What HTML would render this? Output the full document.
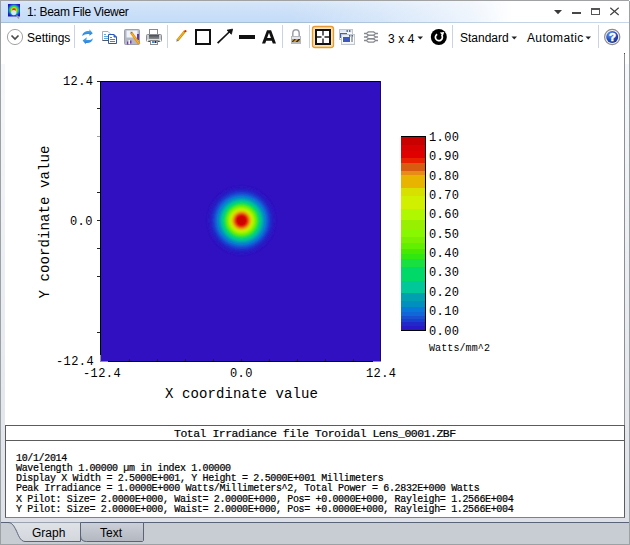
<!DOCTYPE html>
<html><head><meta charset="utf-8">
<style>
*{box-sizing:border-box}
html,body{margin:0;padding:0;width:630px;height:545px;overflow:hidden;background:#fff;position:relative}
body{font-family:"Liberation Sans",sans-serif;color:#000}
.a{position:absolute}
.mono{font-family:"Liberation Mono",monospace}
.sep{position:absolute;width:1px;background:#c5d2e0}
.ui{font-size:12px;line-height:14px;color:#1e1e1e;white-space:nowrap}
.dd{position:absolute;width:0;height:0;border-left:2.5px solid transparent;border-right:2.5px solid transparent;border-top:3px solid #222}
.tk{position:absolute;background:#222}
.lbl{position:absolute;font-family:"Liberation Mono",monospace;color:#000;white-space:nowrap}
.bold{-webkit-text-stroke:0.2px #000}
</style></head><body>

<!-- window frame -->
<div class="a" style="left:0;top:0;width:629px;height:1px;background:#9ba1a5"></div>
<div class="a" style="left:0;top:0;width:1px;height:545px;background:#9ba1a5"></div>
<div class="a" style="left:629px;top:1px;width:1px;height:544px;background:#9ba1a5"></div>

<!-- title bar -->
<div class="a" style="left:1px;top:1px;width:628px;height:21px;background:linear-gradient(90deg,rgba(255,255,255,0) 0px,rgba(255,255,255,0) 290px,rgba(255,255,255,.3) 380px,rgba(255,255,255,.7) 470px,#fff 512px,#fff 630px),linear-gradient(180deg,#dae8fa 0px,#d2e3f8 4px,#cce0f8 10px,#c4dcf8 21px)"></div>
<div class="a" style="left:1px;top:22px;width:628px;height:1px;background:linear-gradient(90deg,#a6bed6 0px,#a6bed6 300px,#c0d2e4 480px,#c8d8ea 630px)"></div>
<div class="a" style="left:0;top:0;width:629px;height:1px;background:#a0a2a4"></div>
<svg class="a" style="left:8px;top:4px" width="14" height="16" viewBox="0 0 14 16">
  <defs><radialGradient id="ig" gradientUnits="userSpaceOnUse" cx="6" cy="6" r="7">
    <stop offset="0" stop-color="#d02000"/><stop offset="0.2" stop-color="#e05000"/><stop offset="0.35" stop-color="#e8d000"/><stop offset="0.5" stop-color="#40e020"/><stop offset="0.65" stop-color="#10b0c0"/><stop offset="0.8" stop-color="#2050d0"/><stop offset="1" stop-color="#2010c8"/></radialGradient></defs>
  <rect x="0" y="0" width="12" height="12.5" fill="url(#ig)"/>
  <circle cx="5.8" cy="8.6" r="2.6" fill="#d8ecf8" opacity="0.95"/>
  <path d="M8.5 11.5L11 14.5" stroke="#a0a0a0" stroke-width="1.6"/>
</svg>
<div class="a ui" style="left:27px;top:5px;letter-spacing:-0.3px;color:#000">1: Beam File Viewer</div>
<!-- window buttons -->
<svg class="a" style="left:550px;top:4px" width="75" height="14" viewBox="550 4 75 14">
  <path d="M554 10H562L558 14.2Z" fill="#3a3a3a"/>
  <rect x="572" y="12" width="9" height="2" fill="#474747"/>
  <rect x="591.5" y="8.5" width="8" height="6" fill="none" stroke="#555" stroke-width="1"/>
  <rect x="591" y="8" width="9" height="2" fill="#555"/>
  <path d="M610.3 7.8L618.7 15M618.7 7.8L610.3 15" stroke="#404040" stroke-width="1.15"/>
</svg>
<!-- toolbar -->
<svg class="a" style="left:0;top:0" width="630" height="53" viewBox="0 0 630 53">
  <defs>
    <linearGradient id="rf" x1="0" y1="0" x2="0" y2="1"><stop offset="0" stop-color="#58b0f0"/><stop offset="1" stop-color="#1c78d8"/></linearGradient>
    <radialGradient id="hg" cx="0.35" cy="0.3" r="0.8"><stop offset="0" stop-color="#6a9cf0"/><stop offset="0.55" stop-color="#2550c0"/><stop offset="1" stop-color="#142c90"/></radialGradient>
    <linearGradient id="pb" x1="0" y1="0" x2="0" y2="1"><stop offset="0" stop-color="#4a4e52"/><stop offset="1" stop-color="#8a8e90"/></linearGradient>
  </defs>
  <!-- settings chevron -->
  <circle cx="15" cy="37" r="7.6" fill="#fff" stroke="#a4a4a4" stroke-width="1"/>
  <path d="M11.5 35.5l3.5 3.5l3.5-3.5" fill="none" stroke="#4a4a4a" stroke-width="1.7"/>
  <!-- separators -->
  <g fill="#c8d4e2"><rect x="74" y="25" width="1" height="23"/><rect x="167" y="25" width="1" height="23"/><rect x="282" y="25" width="1" height="23"/><rect x="309" y="25" width="1" height="23"/><rect x="452" y="25" width="1" height="23"/><rect x="598" y="25" width="1" height="23"/></g>
  <!-- refresh -->
  <g fill="url(#rf)">
    <path d="M82.2 36C82.8 32 85.8 30.6 89.4 31L89.4 29.3L92.8 33.3L89.4 35.8L89.4 34C86.5 33.6 84 34.2 82.2 36Z"/>
    <path d="M93 38.2C92.4 42 89.4 43.4 85.8 43L85.8 44.2L82.6 40.5L86.8 37.2L86.4 39.9C89 40.3 91.2 39.8 93 38.2Z"/>
  </g>
  <!-- copy -->
  <path d="M102.5 31.5H108L110 33.5V40.5H102.5Z" fill="#fff" stroke="#9fb0c8" stroke-width="1"/>
  <path d="M102.5 40.5H110" stroke="#505868" stroke-width="1"/>
  <path d="M104 34.5h2M104 36.5h4M104 38.5h4" stroke="#5aaae8" stroke-width="1"/>
  <path d="M108.5 34.5H114L116.5 37V43.5H108.5Z" fill="#fff" stroke="#2a58b8" stroke-width="1"/>
  <path d="M114 34.5V37H116.5" fill="#3a70d0" stroke="#2a58b8" stroke-width="1"/>
  <path d="M110 37.5h2M110 39.5h5M110 41.5h5" stroke="#3a88d8" stroke-width="1"/>
  <!-- save/edit floppy -->
  <rect x="124.5" y="29.5" width="15" height="15" rx="1" fill="#b4b8c4" stroke="#9ca0ac" stroke-width="1"/>
  <rect x="126.5" y="30.5" width="11" height="7" fill="#eef2fb"/>
  <rect x="137" y="34" width="2" height="6" fill="#6a3aa0"/>
  <rect x="127" y="41.5" width="1.5" height="3" fill="#7040a8"/>
  <rect x="130" y="40.5" width="1.5" height="3" fill="#7040a8"/>
  <rect x="128.5" y="40" width="1.5" height="4" fill="#f4f4f8"/>
  <path d="M131 32.3L139.3 44" stroke="#e89010" stroke-width="2.6"/>
  <path d="M131.3 32.8L139 43.5" stroke="#f8c020" stroke-width="0.9"/>
  <path d="M130.5 31.5L132.2 32.2L131.2 33.4Z" fill="#707070"/>
  <!-- printer -->
  <rect x="149.5" y="29.5" width="8" height="5" fill="#fff" stroke="#8a8a8a" stroke-width="1"/>
  <rect x="146.5" y="34.5" width="15" height="7" rx="1" fill="#c8ccd4" stroke="#8a8e92" stroke-width="1"/>
  <rect x="149" y="35" width="10" height="4" fill="url(#pb)"/>
  <rect x="147" y="39" width="14" height="1" fill="#dde0e4"/>
  <rect x="147" y="40" width="14" height="1.5" fill="#fff"/>
  <rect x="150.5" y="40.5" width="7" height="4" fill="#fff" stroke="#8a8a8a" stroke-width="1"/>
  <rect x="152" y="41" width="2" height="2" fill="#3a90e0"/>
  <rect x="154.5" y="41" width="2" height="2" fill="#1a2a50"/>
  <rect x="148.5" y="40.5" width="1.2" height="1.5" fill="#101030"/>
  <rect x="158.3" y="40.5" width="1.2" height="1.5" fill="#101030"/>
  <!-- pencil -->
  <path d="M177.3 40.5L185.3 30.7" stroke="#d8900f" stroke-width="2.6"/>
  <path d="M177.6 40L185 31" stroke="#f4c020" stroke-width="1"/>
  <path d="M184.6 31.8L185.6 30.4L186.4 31.2Z" fill="#d82020" stroke="#d82020" stroke-width="1"/>
  <path d="M176.3 41.8L176.9 39.4L178.6 40.8Z" fill="#707478"/>
  <!-- rectangle -->
  <rect x="196" y="30" width="14" height="14" fill="none" stroke="#111" stroke-width="2"/>
  <!-- arrow -->
  <path d="M217.6 43.2L229.2 32" stroke="#111" stroke-width="1.7"/>
  <path d="M227 30.2L232.6 29.1L231.4 34.2Z" fill="#111" stroke="#111" stroke-width="0.8" stroke-linejoin="round"/>
  <!-- line -->
  <rect x="239" y="35" width="16" height="4" fill="#111"/>
  <!-- A -->
  <path d="M262 43.6L267 30.2H271.1L276 43.6H272.8L271.8 40.7H266.2L265.2 43.6ZM267.1 38H270.9L269 32.8Z" fill="#111" fill-rule="evenodd"/>
  <!-- lock -->
  <path d="M292.8 36.5V33.2C292.8 30.7 294.2 29.7 296 29.7S299.2 30.7 299.2 33.2V36.5" fill="none" stroke="#9ca0a6" stroke-width="1.5"/>
  <rect x="291.5" y="36.5" width="9" height="7" fill="#e4e6ea" stroke="#b4b8bc" stroke-width="1"/>
  <rect x="292" y="39" width="8" height="3" fill="#d89828"/>
  <path d="M292 41.5L294.5 39H296L293 42H292ZM295.5 42L298.5 39H300V39.5L297.5 42Z" fill="#282828"/>
  <rect x="292" y="42" width="8" height="1.5" fill="#b8bcc0"/>
<!-- fit (selected) -->
  <rect x="312.5" y="26.5" width="21" height="21" rx="2.5" fill="#fbe2b0" stroke="#e49a38" stroke-width="1.3"/><rect x="313.8" y="27.8" width="18.4" height="18.4" rx="1.5" fill="#fdf0d4" stroke="#f6cc78" stroke-width="1"/>
  <rect x="316" y="30" width="14" height="14" fill="#fff" stroke="#111" stroke-width="2"/>
  <path d="M317 37h4.5M324.5 37h4.5M323 31v4.5M323 38.5v4.5" stroke="#222" stroke-width="1.4"/>
  <!-- windows -->
  <rect x="339.5" y="29.5" width="13" height="10" fill="#fff" stroke="#c0c6d0" stroke-width="1"/>
  <rect x="340" y="30" width="12" height="2.5" fill="#dfe8f4"/>
  <rect x="340" y="33" width="7" height="1.6" fill="#3a60d0"/>
  <rect x="340" y="33" width="1.2" height="5" fill="#3a60d0"/>
  <rect x="346.5" y="30.3" width="1.4" height="1.4" fill="#303848"/><rect x="349" y="30.3" width="1.4" height="1.4" fill="#303848"/>
  <rect x="341.5" y="34.5" width="13" height="10" fill="#fff" stroke="#c0c6d0" stroke-width="1"/>
  <rect x="342" y="35" width="12" height="1.8" fill="#e4ecf6"/>
  <rect x="349" y="35.2" width="1.4" height="1.4" fill="#303848"/><rect x="351.5" y="35.2" width="1.4" height="1.4" fill="#303848"/>
  <rect x="343" y="37" width="7" height="5" fill="#3c58c0"/>
  <rect x="351" y="37" width="2" height="5" fill="#a8acb4"/>
  <rect x="342" y="42.5" width="12" height="1.5" fill="#eef2f8"/>
<!-- layers -->
  <g fill="#fff" stroke="#85898e" stroke-width="1.3" stroke-linejoin="round">
    <path d="M366.5 40.5L368.5 38.8H373.5L375.5 40.5L373.5 42.2H368.5Z"/>
    <path d="M366.5 37L368.5 35.3H373.5L375.5 37L373.5 38.7H368.5Z"/>
    <path d="M366.5 33.5L368.5 31.8H373.5L375.5 33.5L373.5 35.2H368.5Z"/>
  </g>
  <path d="M364 33.5H366.5M375.5 33.5H378M364 37H366.5M375.5 37H378M364 40.5H366.5M375.5 40.5H378" stroke="#85898e" stroke-width="1.3"/>
  <!-- dropdown arrows -->
  <path d="M417.5 36.5H423L420.25 39.5Z" fill="#222"/>
  <path d="M511.5 36.5H517L514.25 39.5Z" fill="#222"/>
  <path d="M585.5 36.5H591L588.25 39.5Z" fill="#222"/>
  <!-- reset circle -->
  <circle cx="438.8" cy="37" r="8" fill="#000"/>
  <path d="M437.15 34.17A3.5 3.5 0 1 0 441.58 34.95" fill="none" stroke="#fff" stroke-width="1.7"/>
  <path d="M439.9 32.4L444.2 32.1L442.8 36.3Z" fill="#fff"/>
  <!-- help -->
  <circle cx="612.2" cy="37" r="7.6" fill="#f4f4f4" stroke="#8c8c8c" stroke-width="1.2"/>
  <circle cx="612.2" cy="37" r="6" fill="url(#hg)"/>
  <text x="612.4" y="41.2" text-anchor="middle" font-family="Liberation Sans" font-weight="bold" font-size="11.5" fill="#fff" stroke="#fff" stroke-width="0.6">?</text>
</svg>
<div class="a ui" style="left:27px;top:30.5px;color:#000">Settings</div>
<div class="a ui" style="left:388px;top:31.5px;color:#000;letter-spacing:0.1px">3 x 4</div>
<div class="a ui" style="left:460px;top:31px;color:#000">Standard</div>
<div class="a ui" style="left:527px;top:31px;color:#000;letter-spacing:0.35px">Automatic</div>

<!-- content frame -->
<div class="a" style="left:624px;top:53px;width:1px;height:465px;background:#8c9094;border-top:1px solid #444"></div>
<div class="a" style="left:1px;top:64px;width:4px;height:454px;background:linear-gradient(#f6f8fb,#dfe2e8)"></div>
<div class="a" style="left:625px;top:64px;width:4px;height:454px;background:linear-gradient(#f6f8fb,#dfe2e8)"></div>

<!-- PLOT -->
<svg class="a" style="left:0;top:0" width="630" height="420" viewBox="0 0 630 420">
  <defs><filter id="bb" x="-50%" y="-50%" width="200%" height="200%"><feGaussianBlur stdDeviation="0.9"/></filter></defs>
  <rect x="100" y="81" width="281" height="281" fill="#3010c0"/>
  <g filter="url(#bb)"><circle cx="241.5" cy="220.5" r="34.00" fill="#2c14c2"/><circle cx="241.5" cy="220.5" r="31.36" fill="#2424c6"/><circle cx="241.5" cy="220.5" r="28.63" fill="#1840d0"/><circle cx="241.5" cy="220.5" r="27.05" fill="#1850d0"/><circle cx="241.5" cy="220.5" r="25.81" fill="#1068d8"/><circle cx="241.5" cy="220.5" r="24.61" fill="#0878d8"/><circle cx="241.5" cy="220.5" r="23.43" fill="#0090c0"/><circle cx="241.5" cy="220.5" r="22.00" fill="#00a0b0"/><circle cx="241.5" cy="220.5" r="20.50" fill="#00c898"/><circle cx="241.5" cy="220.5" r="18.68" fill="#00d868"/><circle cx="241.5" cy="220.5" r="16.90" fill="#18e040"/><circle cx="241.5" cy="220.5" r="16.04" fill="#30e810"/><circle cx="241.5" cy="220.5" r="15.43" fill="#48e800"/><circle cx="241.5" cy="220.5" r="14.89" fill="#60f000"/><circle cx="241.5" cy="220.5" r="14.26" fill="#78f000"/><circle cx="241.5" cy="220.5" r="13.61" fill="#88f800"/><circle cx="241.5" cy="220.5" r="12.95" fill="#98f000"/><circle cx="241.5" cy="220.5" r="11.96" fill="#b0f800"/><circle cx="241.5" cy="220.5" r="11.10" fill="#d0f000"/><circle cx="241.5" cy="220.5" r="10.10" fill="#d8e000"/><circle cx="241.5" cy="220.5" r="9.70" fill="#e8b400"/><circle cx="241.5" cy="220.5" r="8.23" fill="#e88c18"/><circle cx="241.5" cy="220.5" r="7.72" fill="#d85c10"/><circle cx="241.5" cy="220.5" r="6.63" fill="#e82000"/><circle cx="241.5" cy="220.5" r="5.91" fill="#e00000"/><circle cx="241.5" cy="220.5" r="4.77" fill="#d80000"/><circle cx="241.5" cy="220.5" r="3.54" fill="#c80000"/></g>
  <path d="M380.5 81.5V361.5" stroke="#160a70" stroke-width="1"/><path d="M380 81.5H100.5V361.5H380" fill="none" stroke="#000" stroke-width="1"/>
  <g stroke="#222" stroke-width="1">
    <path d="M97 81.5h3M97 108.5h3M97 192.5h3M97 220.5h3M97 248.5h3M97 276.5h3M97 332.5h3"/>
    <path d="M97 136.5h3" stroke="#a0a0a0"/>
    <path d="M129.5 359v2M157.5 359v2M185.5 359v2M213.5 359v2M241.5 359v2M269.5 359v2M297.5 359v2M325.5 359v2M353.5 359v2"/>
    <path d="M100.5 355v6M100 361.5h8M373 361.5h8" stroke="#909090"/>
  </g>
</svg>
<div class="lbl" style="left:63px;top:76px;font-size:12px;line-height:12px;letter-spacing:0.4px">12.4</div>
<div class="lbl" style="left:70px;top:216px;font-size:12px;line-height:12px;letter-spacing:0.4px">0.0</div>
<div class="lbl" style="left:56px;top:356px;font-size:12px;line-height:12px;letter-spacing:0.4px">-12.4</div>
<div class="lbl" style="left:83px;top:368px;font-size:12px;line-height:12px;letter-spacing:0.4px">-12.4</div>
<div class="lbl" style="left:230px;top:368px;font-size:12px;line-height:12px;letter-spacing:0.4px">0.0</div>
<div class="lbl" style="left:366px;top:368px;font-size:12px;line-height:12px;letter-spacing:0.4px">12.4</div>
<div class="lbl" style="left:165px;top:387px;font-size:14px;line-height:14px;letter-spacing:0.1px">X coordinate value</div>
<div class="lbl" style="left:45px;top:222px;font-size:14px;line-height:14px;letter-spacing:0.1px;transform:translate(-50%,-50%) rotate(-90deg);transform-origin:50% 50%">Y coordinate value</div>

<!-- colorbar -->
<div class="a" style="left:401px;top:137px;width:24px;height:193px;background:linear-gradient(180deg,#c80000 0px,#c80000 7.7px,#d80000 7.7px,#d80000 13.7px,#e00000 13.7px,#e00000 20.6px,#e82000 20.6px,#e82000 25.6px,#d85c10 25.6px,#d85c10 33.9px,#e88c18 33.9px,#e88c18 38px,#e8b400 38px,#e8b400 50.7px,#d8e000 50.7px,#d8e000 59px,#d0f000 59px,#d0f000 71.8px,#b0f800 71.8px,#b0f800 82.8px,#98f000 82.8px,#98f000 92.9px,#88f800 92.9px,#88f800 99.6px,#78f000 99.6px,#78f000 106px,#60f000 106px,#60f000 112px,#48e800 112px,#48e800 117px,#30e810 117px,#30e810 122.5px,#18e040 122.5px,#18e040 129.9px,#00d868 129.9px,#00d868 143.8px,#00c898 143.8px,#00c898 155.8px,#00a0b0 155.8px,#00a0b0 164px,#0090c0 164px,#0090c0 170.5px,#0878d8 170.5px,#0878d8 175px,#1068d8 175px,#1068d8 178.8px,#1850d0 178.8px,#1850d0 182px,#1840d0 182px,#1840d0 185.2px,#2028c8 185.2px,#2028c8 188.9px,#2818c8 188.9px,#2818c8 193px)"></div>
<div class="a" style="left:401px;top:136px;width:25px;height:1px;background:#000"></div>
<div class="a" style="left:401px;top:330px;width:25px;height:1px;background:#000"></div>
<div class="a" style="left:425px;top:136px;width:1px;height:195px;background:#000"></div>
<div class="lbl" style="left:429px;top:132.00px;font-size:12px;line-height:12px;letter-spacing:0.4px">1.00</div>
<div class="lbl" style="left:429px;top:151.35px;font-size:12px;line-height:12px;letter-spacing:0.4px">0.90</div>
<div class="lbl" style="left:429px;top:170.70px;font-size:12px;line-height:12px;letter-spacing:0.4px">0.80</div>
<div class="lbl" style="left:429px;top:190.05px;font-size:12px;line-height:12px;letter-spacing:0.4px">0.70</div>
<div class="lbl" style="left:429px;top:209.40px;font-size:12px;line-height:12px;letter-spacing:0.4px">0.60</div>
<div class="lbl" style="left:429px;top:228.75px;font-size:12px;line-height:12px;letter-spacing:0.4px">0.50</div>
<div class="lbl" style="left:429px;top:248.10px;font-size:12px;line-height:12px;letter-spacing:0.4px">0.40</div>
<div class="lbl" style="left:429px;top:267.45px;font-size:12px;line-height:12px;letter-spacing:0.4px">0.30</div>
<div class="lbl" style="left:429px;top:286.80px;font-size:12px;line-height:12px;letter-spacing:0.4px">0.20</div>
<div class="lbl" style="left:429px;top:306.15px;font-size:12px;line-height:12px;letter-spacing:0.4px">0.10</div>
<div class="lbl" style="left:429px;top:325.50px;font-size:12px;line-height:12px;letter-spacing:0.4px">0.00</div>
<div class="lbl" style="left:429px;top:344px;font-size:10px;line-height:10px;letter-spacing:0.1px">Watts/mm^2</div>

<!-- text box -->
<div class="a" style="left:5px;top:425px;width:620px;height:93px;border:1px solid #5c5c5c;border-bottom-color:#808080"></div>
<div class="a" style="left:5px;top:440px;width:620px;height:1px;background:#5c5c5c"></div>
<div class="lbl bold" style="left:174px;top:428px;font-size:11.5px;line-height:12px;letter-spacing:-0.5px;color:#000">Total Irradiance file Toroidal Lens_0001.ZBF</div>
<div class="lbl bold" style="left:16px;top:453.5px;font-size:10px;line-height:10.3px;letter-spacing:-0.35px;color:#000">10/1/2014<br>Wavelength 1.00000 µm in index 1.00000<br>Display X Width = 2.5000E+001, Y Height = 2.5000E+001 Millimeters<br>Peak Irradiance = 1.0000E+000 Watts/Millimeters^2, Total Power = 6.2832E+000 Watts<br>X Pilot: Size= 2.0000E+000, Waist= 2.0000E+000, Pos= +0.0000E+000, Rayleigh= 1.2566E+004<br>Y Pilot: Size= 2.0000E+000, Waist= 2.0000E+000, Pos= +0.0000E+000, Rayleigh= 1.2566E+004</div>

<!-- tab strip -->
<div class="a" style="left:1px;top:518px;width:628px;height:4px;background:#dde0e6"></div>
<div class="a" style="left:1px;top:522px;width:628px;height:1px;background:#5a6478"></div>
<div class="a" style="left:1px;top:523px;width:628px;height:21px;background:#c8ccd3"></div>
<div class="a" style="left:0;top:544px;width:630px;height:1px;background:#9ba1a5"></div>
<svg class="a" style="left:0;top:518px" width="160" height="27" viewBox="0 0 160 27">
  <defs><linearGradient id="tt" x1="0" y1="0" x2="0" y2="1"><stop offset="0" stop-color="#ccd0d8"/><stop offset="1" stop-color="#b2b7c0"/></linearGradient>
  <linearGradient id="gt" x1="0" y1="0" x2="0" y2="1"><stop offset="0" stop-color="#dfe2e7"/><stop offset="1" stop-color="#d3d6dc"/></linearGradient></defs>
  <path d="M80.5 4.5H143.5V22.5L142.5 23.5H86.5Q80.5 23.5 80.5 17.5Z" fill="url(#tt)" stroke="#5a6478" stroke-width="1"/>
  <path d="M0 4.5H8C12 4.5 14 8 16 12C18 16 20 23.5 25 23.5H80.5V4.5Z" fill="url(#gt)" stroke="none"/>
  <path d="M1 4.5H8C12 4.5 14 8 16 12C18 16 20 23.5 25 23.5H80.5V4.5" fill="none" stroke="#5a6478" stroke-width="1"/>
</svg>
<div class="a ui" style="left:32px;top:526px;font-size:12px;line-height:14px;color:#000">Graph</div>
<div class="a ui" style="left:100px;top:526px;font-size:12px;line-height:14px;color:#000">Text</div>

</body></html>
